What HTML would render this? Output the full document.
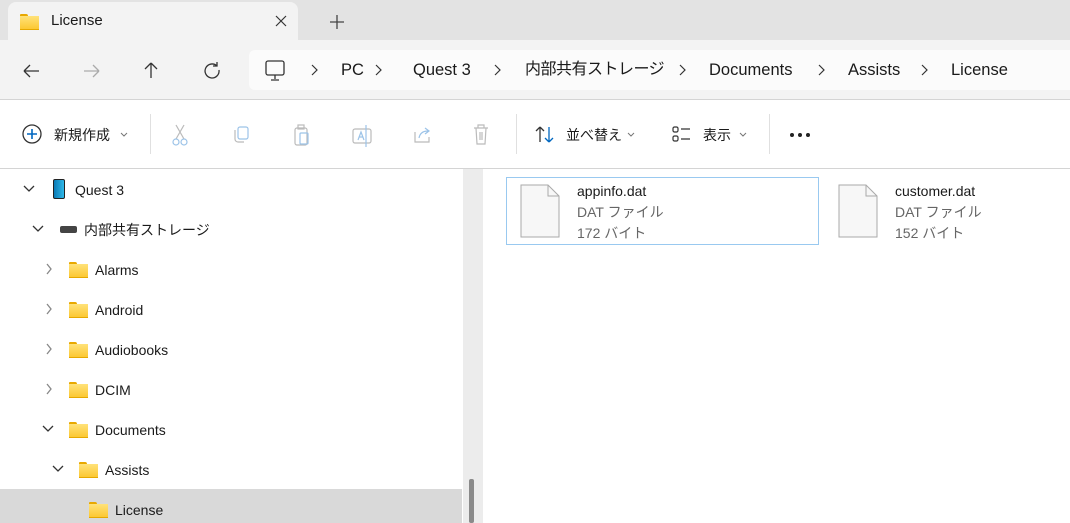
<!DOCTYPE html>
<html><head><meta charset="utf-8"><style>
*{margin:0;padding:0;box-sizing:border-box}
body{width:1070px;height:523px;overflow:hidden;background:#fff;font-family:"Segoe UI","Liberation Sans","Noto Sans CJK JP",sans-serif;font-size:14px;color:#1a1a1a;position:relative}
.a{position:absolute}
.folder{position:absolute;width:19px;height:15px}
.folder:before{content:"";position:absolute;left:0;top:0;width:8px;height:4px;background:#e8a800;border-radius:1px 2px 0 0}
.folder:after{content:"";position:absolute;left:0;top:2px;width:19px;height:13px;background:linear-gradient(#ffe27a,#fcc833);border-bottom:1px solid #e6a800}
.t{position:absolute;white-space:nowrap;line-height:20px}
.g{color:#666}
.bc{position:absolute;top:60px;line-height:20px;font-size:16.5px;white-space:nowrap}
</style></head><body>
<div class="a" style="left:0;top:0;width:1070px;height:40px;background:#e3e3e3"></div>
<div class="a" style="left:8px;top:2px;width:290px;height:40px;background:#f3f3f3;border-radius:8px 8px 0 0"></div>
<div class="folder" style="left:20px;top:14px"></div>
<div class="t" style="left:51px;top:11px;font-size:15px">License</div>
<svg class="a" style="left:275px;top:15px" width="12" height="12" stroke="#333" stroke-width="1.2"><path d="M1 1l10 10M11 1L1 11"/></svg>
<svg class="a" style="left:330px;top:15px" width="14" height="14" stroke="#444" stroke-width="1.3"><path d="M7 0v14M0 7h14"/></svg>
<div class="a" style="left:0;top:40px;width:1070px;height:60px;background:#f3f3f3;border-bottom:1px solid #d4d4d4"></div>
<div class="a" style="left:249px;top:50px;width:821px;height:40px;background:#fbfbfb;border-radius:6px 0 0 6px"></div>
<svg class="a" style="left:20px;top:58px" width="220" height="26" fill="none" stroke-width="1.3">
<path d="M4 13h15M4 13l6-6M4 13l6 6" stroke="#333"/>
<path d="M64 13h15M79 13l-6-6M79 13l-6 6" stroke="#aaa"/>
<path d="M131 5v15M131 5l-6 6M131 5l6 6" stroke="#333"/>
<path d="M197 8a7 7 0 1 0 2 4M197 4v4h-4" stroke="#333"/>
</svg>
<svg class="a" style="left:264px;top:59px" width="24" height="24" fill="none" stroke="#333" stroke-width="1.3"><rect x="2" y="2" width="18" height="14" rx="2"/><path d="M11 16v4M7 21h8"/></svg>
<svg class="a" style="left:0;top:0" width="1070" height="100" fill="none" stroke="#333" stroke-width="1.2">
<path d="M312 65l5 5-5 5M376 65l5 5-5 5M495 65l5 5-5 5M680 65l5 5-5 5M819 65l5 5-5 5M922 65l5 5-5 5"/></svg>
<span class="bc" style="left:341px">PC</span>
<span class="bc" style="left:413px">Quest 3</span>
<span class="bc" style="left:525px;font-size:16px;letter-spacing:-0.5px">内部共有ストレージ</span>
<span class="bc" style="left:709px">Documents</span>
<span class="bc" style="left:848px">Assists</span>
<span class="bc" style="left:951px">License</span>
<div class="a" style="left:0;top:168px;width:1070px;height:1px;background:#d4d4d4"></div>
<svg class="a" style="left:22px;top:124px" width="22" height="22" fill="none" stroke-width="1.3"><circle cx="10" cy="10" r="9" stroke="#333"/><path d="M10 5v10M5 10h10" stroke="#0067c0" stroke-width="1.6"/></svg>
<div class="t" style="left:54px;top:125px">新規作成</div>
<div class="a" style="left:150px;top:114px;width:1px;height:40px;background:#e0e0e0"></div>
<div class="a" style="left:516px;top:114px;width:1px;height:40px;background:#e0e0e0"></div>
<div class="a" style="left:769px;top:114px;width:1px;height:40px;background:#e0e0e0"></div>
<svg class="a" style="left:0;top:0" width="760" height="160" fill="none" stroke="#777" stroke-width="1"><path d="M121 133l3 3 3-3M628 133l3 3 3-3M740 133l3 3 3-3"/></svg>
<svg class="a" style="left:170px;top:122px" width="330" height="26" fill="none" stroke-width="1.2">
<path d="M6 3l8 14M14 3l-8 14" stroke="#bbb"/><circle cx="6" cy="20" r="3" stroke="#9cc3e8"/><circle cx="14" cy="20" r="3" stroke="#9cc3e8"/>
<rect x="68" y="5" width="10" height="12" rx="2" stroke="#9cc3e8"/><path d="M65 8v9a3 3 0 0 0 3 3h6" stroke="#bbb"/>
<rect x="125" y="6" width="12" height="17" rx="2" stroke="#bbb"/><rect x="130" y="11" width="8" height="11" rx="1" stroke="#9cc3e8"/><rect x="128" y="3" width="6" height="4" stroke="#bbb"/>
<rect x="183" y="7" width="18" height="14" rx="2" stroke="#bbb"/><path d="M188 18l3-8 3 8M189 15h4" stroke="#9cc3e8"/><path d="M196 3v22" stroke="#9cc3e8"/>
<path d="M245 10v10h14v-5" stroke="#bbb"/><path d="M249 16c1-5 4-7 9-7M255 6l4 3-4 3" stroke="#9cc3e8"/>
<path d="M304 6h14M308 6V3h6v3M306 6l1 16h8l1-16M310 10v8M312 10v8" stroke="#bbb"/>
</svg>
<svg class="a" style="left:535px;top:124px" width="22" height="22" fill="none" stroke-width="1.3"><path d="M5 18V3M5 3l-4 4M5 3l4 4" stroke="#333"/><path d="M14 3v15M14 18l-4-4M14 18l4-4" stroke="#0067c0"/></svg>
<div class="t" style="left:566px;top:125px">並べ替え</div>
<svg class="a" style="left:671px;top:125px" width="22" height="20" fill="none" stroke="#333" stroke-width="1.2"><rect x="2" y="2" width="5" height="5" rx="1.5"/><rect x="2" y="11" width="5" height="5" rx="1.5"/><path d="M10 4h9M10 14h9"/></svg>
<div class="t" style="left:703px;top:125px">表示</div>
<svg class="a" style="left:789px;top:132px" width="24" height="6" fill="#222"><circle cx="3" cy="3" r="2"/><circle cx="11" cy="3" r="2"/><circle cx="19" cy="3" r="2"/></svg>
<div class="a" style="left:463px;top:169px;width:20px;height:354px;background:#ececec"></div>
<div class="a" style="left:469px;top:479px;width:5px;height:44px;background:#8a8a8a;border-radius:2px"></div>
<div class="a" style="left:0;top:489px;width:462px;height:34px;background:#d9d9d9"></div>
<svg class="a" style="left:0;top:169px" width="120" height="320" fill="none" stroke-width="1.3">
<path d="M24 17l5 5 5-5M33 57l5 5 5-5M43 257l5 5 5-5M53 297l5 5 5-5" stroke="#333"/>
<path d="M47 95l4 5-4 5M47 135l4 5-4 5M47 175l4 5-4 5M47 215l4 5-4 5" stroke="#888"/>
</svg>
<div style="font-size:14px">
<div class="a" style="left:53px;top:179px;width:12px;height:20px;background:linear-gradient(90deg,#0a7ab5,#30b8e8);border-radius:2px;border:1px solid #222"></div>
<div class="t" style="left:75px;top:180px">Quest 3</div>
<div class="a" style="left:60px;top:226px;width:17px;height:7px;background:#444;border-radius:2px"></div>
<div class="t" style="left:84px;top:220px">内部共有ストレージ</div>
<div class="folder" style="left:69px;top:262px"></div><div class="t" style="left:95px;top:260px">Alarms</div>
<div class="folder" style="left:69px;top:302px"></div><div class="t" style="left:95px;top:300px">Android</div>
<div class="folder" style="left:69px;top:342px"></div><div class="t" style="left:95px;top:340px">Audiobooks</div>
<div class="folder" style="left:69px;top:382px"></div><div class="t" style="left:95px;top:380px">DCIM</div>
<div class="folder" style="left:69px;top:422px"></div><div class="t" style="left:95px;top:420px">Documents</div>
<div class="folder" style="left:79px;top:462px"></div><div class="t" style="left:105px;top:460px">Assists</div>
<div class="folder" style="left:89px;top:502px"></div><div class="t" style="left:115px;top:500px">License</div>
</div>
<div class="a" style="left:506px;top:177px;width:313px;height:68px;border:1px solid #99c9f0"></div>
<svg class="a" style="left:520px;top:184px" width="40" height="54"><path d="M1 1h27l11 11v41H1z" fill="#f7f7f7" stroke="#aaa"/><path d="M28 1v11h11" fill="none" stroke="#aaa"/></svg>
<svg class="a" style="left:838px;top:184px" width="40" height="54"><path d="M1 1h27l11 11v41H1z" fill="#f7f7f7" stroke="#aaa"/><path d="M28 1v11h11" fill="none" stroke="#aaa"/></svg>
<div class="t" style="left:577px;top:181px">appinfo.dat</div>
<div class="t g" style="left:577px;top:202px">DAT ファイル</div>
<div class="t g" style="left:577px;top:223px">172 バイト</div>
<div class="t" style="left:895px;top:181px">customer.dat</div>
<div class="t g" style="left:895px;top:202px">DAT ファイル</div>
<div class="t g" style="left:895px;top:223px">152 バイト</div>
</body></html>
